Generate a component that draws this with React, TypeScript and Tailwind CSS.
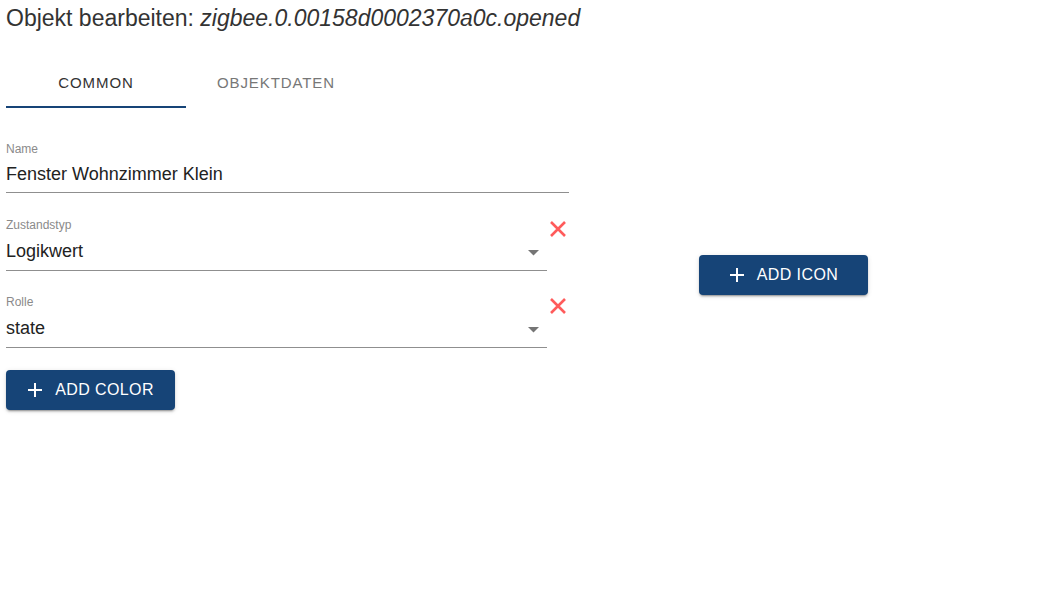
import React from "react";

const XIcon = () => (
  <svg width="18" height="18" viewBox="0 0 18 18" className="block">
    <path d="M2 2 L16 16 M16 2 L2 16" stroke="#ff5b5b" strokeWidth="2.6" strokeLinecap="butt" />
  </svg>
);

const Arrow = () => (
  <svg width="11" height="6" viewBox="0 0 11 6" className="block">
    <path d="M0 0 L11 0 L5.5 5.5 Z" fill="#757575" />
  </svg>
);

const Plus = () => (
  <svg width="24" height="24" viewBox="0 0 24 24" className="block">
    <path d="M19 13h-6v6h-2v-6H5v-2h6V5h2v6h6v2z" fill="#ffffff" />
  </svg>
);

const Btn = ({ label }: { label: string }) => (
  <button className="flex items-center justify-center w-[169px] h-[40px] rounded-[4px] bg-[#164477] text-white text-[16px] tracking-[0.4px] uppercase shadow-[0_3px_1px_-2px_rgba(0,0,0,0.2),0_2px_2px_0_rgba(0,0,0,0.14),0_1px_5px_0_rgba(0,0,0,0.12)]">
    <span className="-ml-[4px] mr-[8px]">
      <Plus />
    </span>
    <span className="leading-[20px]">{label}</span>
  </button>
);

const SelectField = ({ label, value }: { label: string; value: string }) => (
  <div className="flex items-start w-[563px]">
    <div className="w-[541px] border-b border-[#8f8f8f] pb-[8px]">
      <div className="text-[12px] leading-[14px] text-[#8a8a8a]">{label}</div>
      <div className="flex items-center mt-[9px]">
        <div className="flex-1 text-[18px] leading-[21px] text-[#222]">{value}</div>
        <div className="mr-[8px] mt-[3px]">
          <Arrow />
        </div>
      </div>
    </div>
    <div className="ml-[2px] mt-[2px]">
      <XIcon />
    </div>
  </div>
);

export default function App() {
  return (
    <div
      className="w-[1062px] h-[601px] bg-white px-[6px] pt-[4px] text-[#333]"
      style={{ fontFamily: "'Liberation Sans', Arial, sans-serif" }}
    >
      <div className="text-[23px] leading-[28px] text-[#333]">
        Objekt bearbeiten: <i>zigbee.0.00158d0002370a0c.opened</i>
      </div>

      <div className="flex mt-[28px]">
        <div className="w-[180px] h-[48px] flex items-center justify-center border-b-2 border-[#164477] text-[15px] tracking-[0.9px] text-[#333]">
          COMMON
        </div>
        <div className="w-[180px] h-[48px] flex items-center justify-center pb-[2px] text-[15px] tracking-[0.9px] text-[#777]">
          OBJEKTDATEN
        </div>
      </div>

      <div className="flex mt-[34px]">
        <div className="flex flex-col w-[563px]">
          <div className="w-[563px] border-b border-[#8f8f8f] pb-[7px]">
            <div className="text-[12px] leading-[14px] text-[#8a8a8a]">Name</div>
            <div className="mt-[8px] text-[18px] leading-[21px] text-[#222]">Fenster Wohnzimmer Klein</div>
          </div>
          <div className="mt-[25px]">
            <SelectField label="Zustandstyp" value="Logikwert" />
          </div>
          <div className="mt-[24px]">
            <SelectField label="Rolle" value="state" />
          </div>
          <div className="mt-[22px]">
            <Btn label="Add Color" />
          </div>
        </div>
        <div className="ml-[130px] mt-[113px]">
          <Btn label="Add Icon" />
        </div>
      </div>
    </div>
  );
}
